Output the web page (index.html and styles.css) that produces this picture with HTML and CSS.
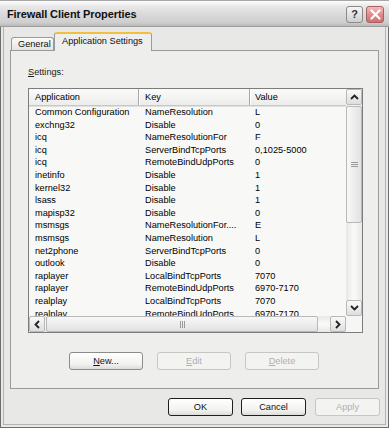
FILE: index.html
```html
<!DOCTYPE html>
<html>
<head>
<meta charset="utf-8">
<link rel="stylesheet" href="styles.css">
</head>
<body>
<div class="window">
  <div class="titlebar">
    <span class="title">Firewall Client Properties</span>
    <div class="caption-buttons">
      <div class="cap-btn help">?</div>
      <div class="cap-btn close">
        <svg width="11" height="11" viewBox="0 0 11 11"><path d="M1.5 1.5 L9.5 9.5 M9.5 1.5 L1.5 9.5" stroke="#fff" stroke-width="2.2" stroke-linecap="round"/></svg>
      </div>
    </div>
  </div>
  <div class="client">
    <div class="tabs">
      <div class="tab">General</div>
      <div class="tab active">Application Settings</div>
    </div>
    <div class="panel">
      <div class="label"><u>S</u>ettings:</div>
      <div class="listview">
        <div class="lv-main">
          <div class="lv-header">
            <div class="hcell">Application</div>
            <div class="hcell">Key</div>
            <div class="hcell last">Value</div>
          </div>
          <div class="lv-rows">
            <div class="row"><span>Common Configuration</span><span>NameResolution</span><span>L</span></div>
            <div class="row"><span>exchng32</span><span>Disable</span><span>0</span></div>
            <div class="row"><span>icq</span><span>NameResolutionFor</span><span>F</span></div>
            <div class="row"><span>icq</span><span>ServerBindTcpPorts</span><span>0,1025-5000</span></div>
            <div class="row"><span>icq</span><span>RemoteBindUdpPorts</span><span>0</span></div>
            <div class="row"><span>inetinfo</span><span>Disable</span><span>1</span></div>
            <div class="row"><span>kernel32</span><span>Disable</span><span>1</span></div>
            <div class="row"><span>lsass</span><span>Disable</span><span>1</span></div>
            <div class="row"><span>mapisp32</span><span>Disable</span><span>0</span></div>
            <div class="row"><span>msmsgs</span><span>NameResolutionFor....</span><span>E</span></div>
            <div class="row"><span>msmsgs</span><span>NameResolution</span><span>L</span></div>
            <div class="row"><span>net2phone</span><span>ServerBindTcpPorts</span><span>0</span></div>
            <div class="row"><span>outlook</span><span>Disable</span><span>0</span></div>
            <div class="row"><span>raplayer</span><span>LocalBindTcpPorts</span><span>7070</span></div>
            <div class="row"><span>raplayer</span><span>RemoteBindUdpPorts</span><span>6970-7170</span></div>
            <div class="row"><span>realplay</span><span>LocalBindTcpPorts</span><span>7070</span></div>
            <div class="row"><span>realplay</span><span>RemoteBindUdpPorts</span><span>6970-7170</span></div>
          </div>
        </div>
        <div class="vscroll">
          <div class="sb-btn"><svg width="9" height="6" viewBox="0 0 9 6"><path d="M1 5 L4.5 1.5 L8 5" fill="none" stroke="#222" stroke-width="1.8"/></svg></div>
          <div class="v-track">
            <div class="v-thumb"><svg width="7" height="7" viewBox="0 0 7 7"><path d="M0 1.5H7M0 3.5H7M0 5.5H7" stroke="#9a9a9a" stroke-width="1"/></svg></div>
          </div>
          <div class="sb-btn"><svg width="9" height="6" viewBox="0 0 9 6"><path d="M1 1 L4.5 4.5 L8 1" fill="none" stroke="#222" stroke-width="1.8"/></svg></div>
        </div>
        <div class="hscroll">
          <div class="sb-btn"><svg width="6" height="9" viewBox="0 0 6 9"><path d="M5 1 L1.5 4.5 L5 8" fill="none" stroke="#222" stroke-width="1.8"/></svg></div>
          <div class="h-track">
            <div class="h-thumb"><svg width="7" height="7" viewBox="0 0 7 7"><path d="M1.5 0V7M3.5 0V7M5.5 0V7" stroke="#9a9a9a" stroke-width="1"/></svg></div>
          </div>
          <div class="sb-btn"><svg width="6" height="9" viewBox="0 0 6 9"><path d="M1 1 L4.5 4.5 L1 8" fill="none" stroke="#222" stroke-width="1.8"/></svg></div>
        </div>
        <div class="sizebox"></div>
      </div>
      <div class="btn-row">
        <div class="btn"><u>N</u>ew...</div>
        <div class="btn disabled"><u>E</u>dit</div>
        <div class="btn disabled"><u>D</u>elete</div>
      </div>
    </div>
    <div class="dlg-buttons">
      <div class="btn default">OK</div>
      <div class="btn default">Cancel</div>
      <div class="btn disabled">Apply</div>
    </div>
  </div>
</div>
</body>
</html>
```
FILE: styles.css
```css
* { box-sizing: border-box; }
html, body { margin: 0; padding: 0; background: #e4e4e2; }
body {
  font-family: "Liberation Sans", Arial, sans-serif;
  font-size: 9.2px;
  color: #000;
}
.window {
  width: 389px;
  height: 428px;
  border: 1px solid #6e6e6e;
  border-top: none;
  padding: 0 2px 2px 2px;
  background: #e8e8e6;
  display: flex;
  flex-direction: column;
}
.titlebar {
  margin: 0 -3px;
  height: 27px;
  flex: none;
  display: flex;
  align-items: center;
  justify-content: space-between;
  padding: 0 5px 0 7px;
  background: linear-gradient(#fdfdfd 0%, #e9e9e9 20%, #d9d9d9 55%, #cfcfcf 85%, #b9b9b9 100%);
  border-top: 1px solid #a8a8a8;
  border-bottom: 1px solid #9c9c9c;
}
.title {
  font-weight: bold;
  font-size: 11px;
  letter-spacing: -0.1px;
  color: #111;
  margin-top: 1px;
}
.caption-buttons { display: flex; gap: 3px; margin-top: 1px; }
.cap-btn {
  width: 17px;
  height: 17px;
  border-radius: 3px;
  display: flex;
  align-items: center;
  justify-content: center;
}
.help {
  background: linear-gradient(#f6f6f6, #cfcfcf);
  border: 1px solid #8a8a8a;
  font-weight: bold;
  font-size: 11px;
  color: #333;
}
.close {
  width: 18px;
  background: linear-gradient(#f6baba, #e08686 55%, #d47070);
  border: 1px solid #a46262;
}
.client {
  flex: 1;
  border: 1px solid #b3b3b3;
  border-top: none;
  padding: 5px 6px 0 6px;
  display: flex;
  flex-direction: column;
}
.tabs {
  display: flex;
  align-items: flex-end;
  height: 18px;
  padding-left: 1px;
  position: relative;
  z-index: 1;
}
.tab {
  height: 13px;
  padding: 0 0 0 6px;
  width: 43px;
  border: 1px solid #9a9a9a;
  border-bottom: none;
  border-radius: 3px 3px 0 0;
  background: linear-gradient(#fbfbfb, #e4e4e2);
  line-height: 13px;
  color: #111;
}
.tab.active {
  width: 98px;
  height: 19px;
  margin-bottom: -1px;
  padding-left: 7px;
  border-top: 2px solid #f0c040;
  background: #eeeeec;
  line-height: 15px;
}
.panel {
  height: 339px;
  flex: none;
  border: 1px solid #9a9a9a;
  background: #eeeeec;
  padding: 16px 0 0 17px;
}
.label { height: 11px; line-height: 11px; color: #222; }
.listview {
  margin-top: 10px;
  width: 335px;
  height: 245px;
  border: 1px solid #7c7c7c;
  background: #f8f8f6;
  display: grid;
  grid-template-columns: 1fr 16px;
  grid-template-rows: 1fr 16px;
}
.lv-main { overflow: hidden; display: flex; flex-direction: column; }
.lv-header {
  height: 17px;
  flex: none;
  display: grid;
  grid-template-columns: 110px 111px 1fr;
  background: linear-gradient(#fbfbfb, #ececea);
  border-bottom: 1px solid #c8c8c8;
  box-shadow: 0 1px 0 #e0e0e0;
}
.hcell {
  padding-left: 6px;
  line-height: 16px;
  border-right: 1px solid #a8a8a8;
  box-shadow: 1px 0 0 #fff;
}
.hcell.last { border-right: none; box-shadow: none; padding-left: 5px; }
.lv-rows { flex: 1; overflow: hidden; }
.row {
  display: grid;
  grid-template-columns: 110px 111px 1fr;
  height: 12.6px;
  line-height: 12.6px;
}
.row span { padding-left: 6px; white-space: nowrap; overflow: hidden; }
.row span:last-child { padding-left: 5px; }
.vscroll {
  display: flex;
  flex-direction: column;
  background: #f3f3f1;
}
.sb-btn {
  width: 16px;
  height: 16px;
  flex: none;
  border: 1px solid #b8b8b8;
  border-radius: 2px;
  background: linear-gradient(#fafafa, #dedede);
  display: flex;
  align-items: center;
  justify-content: center;
}
.v-track {
  flex: 1;
  padding: 1px 0;
  background: linear-gradient(90deg, #e8e8e6, #fafaf8 50%, #e8e8e6);
}
.v-thumb {
  height: 117px;
  border: 1px solid #b8b8b8;
  border-radius: 2px;
  background: linear-gradient(90deg, #f8f8f8, #e2e2e2);
  display: flex;
  align-items: center;
  justify-content: center;
}
.hscroll {
  display: flex;
  background: #f3f3f1;
}
.h-track {
  flex: 1;
  padding: 0 1px;
  background: linear-gradient(#e8e8e6, #fafaf8 50%, #e8e8e6);
}
.h-thumb {
  width: 272px;
  height: 16px;
  border: 1px solid #b8b8b8;
  border-radius: 2px;
  background: linear-gradient(#f8f8f8, #e2e2e2);
  display: flex;
  align-items: center;
  justify-content: center;
}
.sizebox { background: #f6f6f4; }
.btn-row {
  display: flex;
  gap: 14px;
  margin-top: 19px;
  padding-left: 41px;
}
.btn {
  width: 74px;
  height: 18px;
  border: 1px solid #8c8c8c;
  border-radius: 3px;
  background: linear-gradient(#ffffff, #f2f2f0 70%, #dcdcda);
  text-align: center;
  line-height: 16px;
  color: #111;
}
.btn.disabled {
  border-color: #c6c6c4;
  color: #b0b0ac;
  background: #f3f3f1;
}
.btn.default { border-color: #1e1e1e; }
.dlg-buttons {
  display: flex;
  justify-content: flex-end;
  gap: 9px;
  margin-top: 9px;
  margin-right: -1px;
}
.dlg-buttons .btn { width: 65px; }
.dlg-buttons .btn:first-child { margin-right: -1px; }
```
